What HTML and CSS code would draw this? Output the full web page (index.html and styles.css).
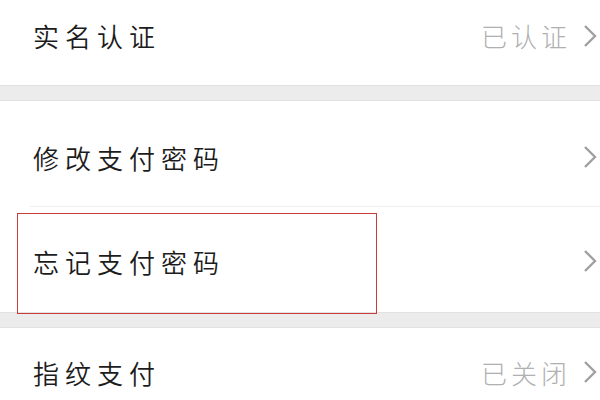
FILE: index.html
```html
<!DOCTYPE html>
<html lang="zh-CN">
<head>
    <meta charset="UTF-8">
    <meta name="viewport" content="width=device-width, initial-scale=1.0">
    <title>支付设置</title>
    <link rel="stylesheet" href="styles.css">
</head>
<body>
    <div class="page">
        <div class="group">
            <div class="row first">
                <span class="label">实名认证</span>
                <span class="value">已认证</span>
                <svg class="arrow" viewBox="0 0 14 24"><path d="M2 2 L12 12 L2 22"/></svg>
            </div>
        </div>

        <div class="gap"></div>

        <div class="group">
            <div class="row">
                <span class="label">修改支付密码</span>
                <svg class="arrow" viewBox="0 0 14 24"><path d="M2 2 L12 12 L2 22"/></svg>
            </div>
            <div class="divider"></div>
            <div class="row marked">
                <span class="label">忘记支付密码</span>
                <svg class="arrow" viewBox="0 0 14 24"><path d="M2 2 L12 12 L2 22"/></svg>
                <div class="highlight"></div>
            </div>
        </div>

        <div class="gap"></div>

        <div class="group">
            <div class="row last">
                <span class="label">指纹支付</span>
                <span class="value">已关闭</span>
                <svg class="arrow" viewBox="0 0 14 24"><path d="M2 2 L12 12 L2 22"/></svg>
            </div>
        </div>
    </div>
</body>
</html>
```

FILE: styles.css
```css
body {
    margin: 0;
    background: #ffffff;
    font-family: "Noto Sans CJK SC", "Noto Sans", sans-serif;
    overflow: hidden;
}
.page {
    width: 600px;
    height: 400px;
    overflow: hidden;
}
.group {
    background: #ffffff;
}
.row {
    position: relative;
    display: flex;
    align-items: center;
    height: 105px;
    padding: 7px 3px 0 33px;
    box-sizing: border-box;
}
.row.first {
    height: 85px;
    padding: 0 3px 14px 33px;
}
.row.marked {
    padding-top: 3px;
}
.row.last {
    height: 72px;
    padding: 16px 3px 0 33px;
}
.label {
    flex: 1;
    font-size: 26px;
    font-weight: 350;
    letter-spacing: 6px;
    color: #1c1c1c;
}
.value {
    font-size: 26px;
    font-weight: 300;
    letter-spacing: 4px;
    color: #b0b0b0;
    margin-right: 12px;
}
.arrow {
    width: 14px;
    height: 24px;
    fill: none;
    stroke: #a0a0a0;
    stroke-width: 2.4;
}
.divider {
    height: 1px;
    margin-left: 30px;
    background: #efefef;
}
.gap {
    height: 14px;
    background: #ececec;
    border-top: 1px solid #e2e2e2;
    border-bottom: 1px solid #e2e2e2;
}
.highlight {
    position: absolute;
    left: 17px;
    top: 6px;
    width: 358px;
    height: 99px;
    border: 1px solid #cc3b3b;
    z-index: 2;
}
```
